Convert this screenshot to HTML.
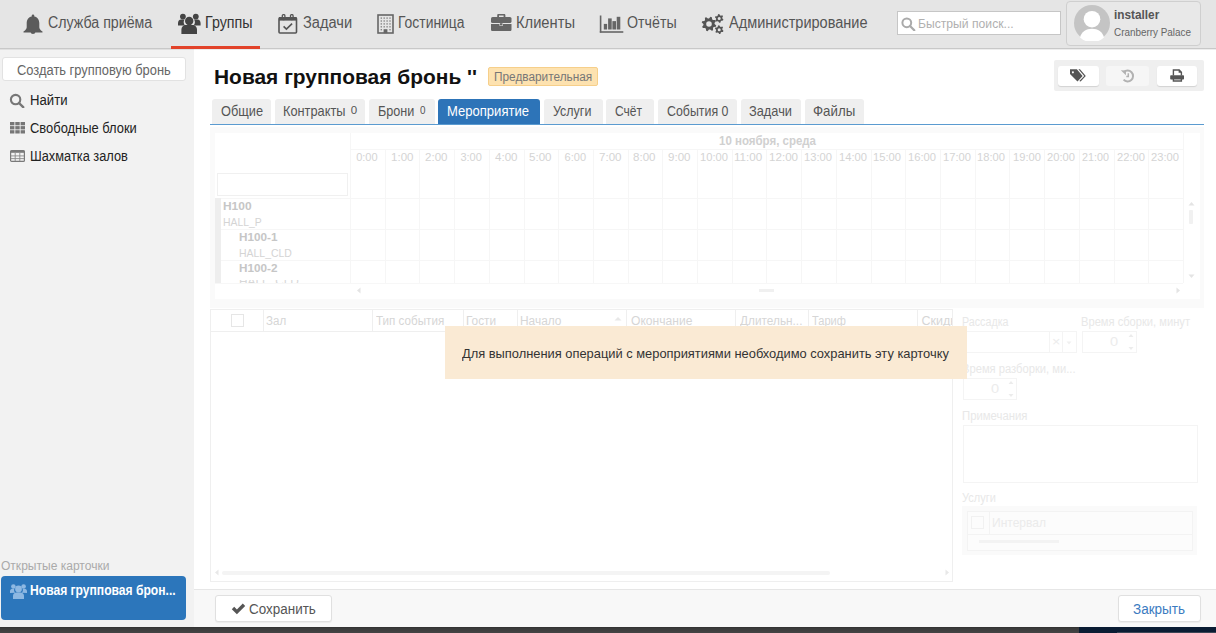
<!DOCTYPE html><html><head><meta charset="utf-8"><style>
html,body{margin:0;padding:0;}
body{width:1216px;height:633px;overflow:hidden;position:relative;background:#fff;font-family:"Liberation Sans", sans-serif;}
</style></head><body><div style="position:absolute;left:0px;top:0px;width:1216px;height:48px;background:#e5e5e5;"></div>
<div style="position:absolute;left:0px;top:48px;width:1216px;height:1px;background:#c8c8c8;"></div>
<div style="position:absolute;left:0px;top:49px;width:1216px;height:1px;background:rgba(0,0,0,.07);z-index:3;"></div>
<div style="position:absolute;left:171px;top:46px;width:89px;height:3px;background:#e2432a;"></div>
<svg style="position:absolute;left:23px;top:14px;" width="20" height="20" viewBox="0 0 20 20"><path d="M10 0.5c.8 0 1.3.6 1.3 1.3v.6c3.2.6 5 3.3 5 6.6v4.2c0 1.4.9 2.7 3.2 4.3v.9H.5v-.9c2.3-1.6 3.2-2.9 3.2-4.3V9c0-3.3 1.8-6 5-6.6v-.6c0-.7.5-1.3 1.3-1.3zM7.6 18h4.8c0 1.3-1.1 2-2.4 2s-2.4-.7-2.4-2z" fill="#5b5b5b"/></svg>
<div style="position:absolute;left:48.11px;top:14.56px;font-size:16px;line-height:16px;font-weight:400;color:#555;white-space:nowrap;transform-origin:0 0;transform:scaleX(0.8879);">Служба приёма</div>
<svg style="position:absolute;left:178px;top:13px;" width="23" height="21" viewBox="0 0 23 21"><circle cx="11.2" cy="8" r="4.2" fill="#444"/><circle cx="4.9" cy="3.6" r="2.9" fill="#444"/><circle cx="17.8" cy="3.6" r="2.9" fill="#444"/><path d="M3.4 21v-4.2c0-2.9 2.2-4.8 4.4-4.8h6.8c2.2 0 4.4 1.9 4.4 4.8V21z" fill="#444"/><path d="M0 12.4v-2.2c0-2 1.2-3.6 3.2-3.6h3.4c-.6.7-.9 1.5-.9 2.4 0 1.4.5 2.6 1.4 3.4z" fill="#444"/><path d="M22.6 12.4v-2.2c0-2-1.2-3.6-3.2-3.6H16c.6.7.9 1.5.9 2.4 0 1.4-.5 2.6-1.4 3.4z" fill="#444"/></svg>
<div style="position:absolute;left:204.97px;top:14.56px;font-size:16px;line-height:16px;font-weight:400;color:#333;white-space:nowrap;transform-origin:0 0;transform:scaleX(0.8902);">Группы</div>
<svg style="position:absolute;left:278px;top:14px;" width="20" height="20" viewBox="0 0 20 20"><rect x="1" y="3.8" width="17.5" height="15.2" rx="1" fill="none" stroke="#555" stroke-width="1.6"/><rect x="1" y="3" width="17.5" height="3.6" fill="#555"/><rect x="4.3" y="0.6" width="2.6" height="5" rx="1.2" fill="none" stroke="#555" stroke-width="1.3"/><rect x="12.5" y="0.6" width="2.6" height="5" rx="1.2" fill="none" stroke="#555" stroke-width="1.3"/><path d="M5.6 12.4l2.8 2.7 5.7-5.4" fill="none" stroke="#555" stroke-width="1.6"/></svg>
<div style="position:absolute;left:303.09px;top:14.56px;font-size:16px;line-height:16px;font-weight:400;color:#555;white-space:nowrap;transform-origin:0 0;transform:scaleX(0.9135);">Задачи</div>
<svg style="position:absolute;left:377px;top:14px;" width="17" height="20" viewBox="0 0 17 20"><rect x="1" y="1" width="15" height="18" fill="none" stroke="#666" stroke-width="1.6"/><rect x="3.6" y="3.4" width="1.4" height="1.4" fill="#888"/><rect x="6.5" y="3.4" width="1.4" height="1.4" fill="#888"/><rect x="9.4" y="3.4" width="1.4" height="1.4" fill="#888"/><rect x="12.3" y="3.4" width="1.4" height="1.4" fill="#888"/><rect x="3.6" y="6.3" width="1.4" height="1.4" fill="#888"/><rect x="6.5" y="6.3" width="1.4" height="1.4" fill="#888"/><rect x="9.4" y="6.3" width="1.4" height="1.4" fill="#888"/><rect x="12.3" y="6.3" width="1.4" height="1.4" fill="#888"/><rect x="3.6" y="9.2" width="1.4" height="1.4" fill="#888"/><rect x="6.5" y="9.2" width="1.4" height="1.4" fill="#888"/><rect x="9.4" y="9.2" width="1.4" height="1.4" fill="#888"/><rect x="12.3" y="9.2" width="1.4" height="1.4" fill="#888"/><rect x="3.6" y="12.1" width="1.4" height="1.4" fill="#888"/><rect x="6.5" y="12.1" width="1.4" height="1.4" fill="#888"/><rect x="9.4" y="12.1" width="1.4" height="1.4" fill="#888"/><rect x="12.3" y="12.1" width="1.4" height="1.4" fill="#888"/><rect x="3.6" y="15" width="1.4" height="1.4" fill="#888"/><rect x="12.3" y="15" width="1.4" height="1.4" fill="#888"/><rect x="6.6" y="15.2" width="3.8" height="4" fill="#666"/></svg>
<div style="position:absolute;left:398.13px;top:14.56px;font-size:16px;line-height:16px;font-weight:400;color:#555;white-space:nowrap;transform-origin:0 0;transform:scaleX(0.8684);">Гостиница</div>
<svg style="position:absolute;left:491px;top:14px;" width="21" height="17" viewBox="0 0 21 17"><path d="M6.2 3V1.2C6.2.6 6.7 0 7.4 0h5.8c.7 0 1.2.6 1.2 1.2V3h-1.8V1.6H8V3z" fill="#666"/><rect x="0" y="3" width="20.5" height="6" rx="1.6" fill="#666"/><path d="M0 9.9h8.4v1.8h3.6V9.9h8.5v5.5c0 .9-.7 1.6-1.6 1.6H1.6C.7 17 0 16.3 0 15.4z" fill="#666"/><rect x="8.9" y="9.2" width="2.6" height="2" fill="#666"/></svg>
<div style="position:absolute;left:516.08px;top:14.56px;font-size:16px;line-height:16px;font-weight:400;color:#555;white-space:nowrap;transform-origin:0 0;transform:scaleX(0.9194);">Клиенты</div>
<svg style="position:absolute;left:599px;top:15px;" width="25" height="18" viewBox="0 0 25 18"><rect x="0.8" y="0.5" width="1.6" height="17" fill="#666"/><rect x="0.8" y="16.2" width="23.5" height="1.6" fill="#666"/><rect x="4.8" y="8.9" width="3.3" height="5.6" fill="#666"/><rect x="9.1" y="3.4" width="3.6" height="11.1" fill="#666"/><rect x="13.4" y="6.1" width="3.6" height="8.4" fill="#666"/><rect x="17.7" y="1.8" width="3.6" height="12.7" fill="#666"/></svg>
<div style="position:absolute;left:627.11px;top:14.56px;font-size:16px;line-height:16px;font-weight:400;color:#555;white-space:nowrap;transform-origin:0 0;transform:scaleX(0.8889);">Отчёты</div>
<svg style="position:absolute;left:701px;top:13px;" width="25" height="22" viewBox="0 0 25 22"><path d="M15.26 12.44 L14.84 13.83 L12.66 14.11 L11.96 14.96 L12.11 17.15 L10.83 17.84 L9.09 16.49 L8.00 16.60 L6.56 18.26 L5.17 17.84 L4.89 15.66 L4.04 14.96 L1.85 15.11 L1.16 13.83 L2.51 12.09 L2.40 11.00 L0.74 9.56 L1.16 8.17 L3.34 7.89 L4.04 7.04 L3.89 4.85 L5.17 4.16 L6.91 5.51 L8.00 5.40 L9.44 3.74 L10.83 4.16 L11.11 6.34 L11.96 7.04 L14.15 6.89 L14.84 8.17 L13.49 9.91 L13.60 11.00Z M10.80 11.00 A2.8 2.8 0 1 0 5.20 11.00 A2.8 2.8 0 1 0 10.80 11.00Z" fill="#555" fill-rule="evenodd"/><path d="M22.45 6.54 L22.01 7.60 L20.46 7.66 L19.80 8.17 L19.34 9.65 L18.20 9.80 L17.37 8.49 L16.60 8.17 L15.09 8.51 L14.39 7.60 L15.11 6.23 L15.00 5.40 L13.95 4.26 L14.39 3.20 L15.94 3.14 L16.60 2.63 L17.06 1.15 L18.20 1.00 L19.03 2.31 L19.80 2.63 L21.31 2.29 L22.01 3.20 L21.29 4.57 L21.40 5.40Z M19.70 5.40 A1.5 1.5 0 1 0 16.70 5.40 A1.5 1.5 0 1 0 19.70 5.40Z" fill="#555" fill-rule="evenodd"/><path d="M22.45 17.84 L22.01 18.90 L20.46 18.96 L19.80 19.47 L19.34 20.95 L18.20 21.10 L17.37 19.79 L16.60 19.47 L15.09 19.81 L14.39 18.90 L15.11 17.53 L15.00 16.70 L13.95 15.56 L14.39 14.50 L15.94 14.44 L16.60 13.93 L17.06 12.45 L18.20 12.30 L19.03 13.61 L19.80 13.93 L21.31 13.59 L22.01 14.50 L21.29 15.87 L21.40 16.70Z M19.70 16.70 A1.5 1.5 0 1 0 16.70 16.70 A1.5 1.5 0 1 0 19.70 16.70Z" fill="#555" fill-rule="evenodd"/></svg>
<div style="position:absolute;left:729.0px;top:14.56px;font-size:16px;line-height:16px;font-weight:400;color:#555;white-space:nowrap;transform-origin:0 0;transform:scaleX(0.9079);">Администрирование</div>
<div style="position:absolute;left:897px;top:11px;width:162px;height:22px;background:#fff;border:1px solid #c6c6c6;"></div>
<svg style="position:absolute;left:901px;top:17px;" width="15" height="14" viewBox="0 0 15 14"><circle cx="5.8" cy="5.8" r="4.4" fill="none" stroke="#aaa" stroke-width="2"/><path d="M9 9l4.3 4.3" stroke="#aaa" stroke-width="2.2" stroke-linecap="round"/></svg>
<div style="position:absolute;left:918.06px;top:17.10px;font-size:13px;line-height:13px;font-weight:400;color:#b0b0b0;white-space:nowrap;transform-origin:0 0;transform:scaleX(0.9350);">Быстрый поиск...</div>
<div style="position:absolute;left:1066px;top:1px;width:135px;height:45px;background:#e8e8e8;border:1px solid #cfcfcf;border-radius:4px;box-sizing:border-box;"></div>
<svg style="position:absolute;left:1074px;top:5px;" width="36" height="36" viewBox="0 0 36 36"><circle cx="18" cy="18" r="18" fill="#c4c4c4"/><circle cx="18" cy="14.2" r="8.3" fill="#fff"/><path d="M6 32.5c1.4-5.6 6-8.8 12-8.8s10.6 3.2 12 8.8A18 18 0 0 1 6 32.5z" fill="#fff"/></svg>
<div style="position:absolute;left:1114.05px;top:7.60px;font-size:13px;line-height:13px;font-weight:700;color:#555;white-space:nowrap;transform-origin:0 0;transform:scaleX(0.9082);">installer</div>
<div style="position:absolute;left:1114.05px;top:26.69px;font-size:11px;line-height:11px;font-weight:400;color:#666;white-space:nowrap;transform-origin:0 0;transform:scaleX(0.9000);">Cranberry Palace</div>
<div style="position:absolute;left:0px;top:49px;width:194px;height:578px;background:#f2f2f2;"></div>
<div style="position:absolute;left:2px;top:57px;width:184px;height:24px;background:#fff;border:1px solid #e2e2e2;border-radius:3px;box-sizing:border-box;"></div>
<div style="position:absolute;left:17.08px;top:62.75px;font-size:14px;line-height:14px;font-weight:400;color:#666;white-space:nowrap;transform-origin:0 0;transform:scaleX(0.9212);">Создать групповую бронь</div>
<svg style="position:absolute;left:9px;top:93px;" width="16" height="15" viewBox="0 0 16 15"><circle cx="6.6" cy="6.6" r="4.7" fill="none" stroke="#777" stroke-width="2.1"/><path d="M10 10l4.2 4.2" stroke="#777" stroke-width="2.4" stroke-linecap="round"/></svg>
<div style="position:absolute;left:29.64px;top:93.15px;font-size:14px;line-height:14px;font-weight:400;color:#222;white-space:nowrap;transform-origin:0 0;transform:scaleX(0.9395);">Найти</div>
<svg style="position:absolute;left:10px;top:122px;" width="16" height="12" viewBox="0 0 16 12"><rect x="0.0" y="0.0" width="4.4" height="3.3" fill="#777"/><rect x="5.3" y="0.0" width="4.4" height="3.3" fill="#777"/><rect x="10.6" y="0.0" width="4.4" height="3.3" fill="#777"/><rect x="0.0" y="4.1" width="4.4" height="3.3" fill="#777"/><rect x="5.3" y="4.1" width="4.4" height="3.3" fill="#777"/><rect x="10.6" y="4.1" width="4.4" height="3.3" fill="#777"/><rect x="0.0" y="8.2" width="4.4" height="3.3" fill="#777"/><rect x="5.3" y="8.2" width="4.4" height="3.3" fill="#777"/><rect x="10.6" y="8.2" width="4.4" height="3.3" fill="#777"/></svg>
<div style="position:absolute;left:29.65px;top:120.95px;font-size:14px;line-height:14px;font-weight:400;color:#222;white-space:nowrap;transform-origin:0 0;transform:scaleX(0.9228);">Свободные блоки</div>
<svg style="position:absolute;left:10px;top:150px;" width="15" height="12" viewBox="0 0 15 12"><rect x="0.6" y="0.6" width="13.8" height="10.8" rx="1" fill="none" stroke="#7a7a7a" stroke-width="1.2"/><rect x="0.6" y="0.6" width="13.8" height="2.2" fill="#7a7a7a"/><path d="M5.2 3v8M9.8 3v8M1 5.9h13M1 8.6h13" stroke="#8a8a8a" stroke-width="0.9"/></svg>
<div style="position:absolute;left:29.66px;top:149.05px;font-size:14px;line-height:14px;font-weight:400;color:#222;white-space:nowrap;transform-origin:0 0;transform:scaleX(0.9151);">Шахматка залов</div>
<div style="position:absolute;left:0.59px;top:559.84px;font-size:12px;line-height:12px;font-weight:400;color:#aaa;white-space:nowrap;transform-origin:0 0;transform:scaleX(1.0028);">Открытые карточки</div>
<div style="position:absolute;left:1px;top:576px;width:185px;height:44px;background:#2c76bb;border-radius:4px;"></div>
<svg style="position:absolute;left:10px;top:584px;" width="17" height="15" viewBox="0 0 17 15"><circle cx="8.5" cy="5" r="3.4" fill="#8eb8e2"/><circle cx="3.4" cy="2.5" r="2.3" fill="#8eb8e2"/><circle cx="13.6" cy="2.5" r="2.3" fill="#8eb8e2"/><path d="M3 15v-3c0-2 1.6-3.4 3.3-3.4h4.4c1.7 0 3.3 1.4 3.3 3.4v3z" fill="#8eb8e2"/><path d="M0 9v-1.8c0-1.4 1-2.4 2.4-2.4h2.1c-.3.4-.4.8-.4 1.3 0 1 .4 2 1.1 2.6z" fill="#8eb8e2"/><path d="M17 9v-1.8c0-1.4-1-2.4-2.4-2.4h-2.1c.3.4.4.8.4 1.3 0 1-.4 2-1.1 2.6z" fill="#8eb8e2"/></svg>
<div style="position:absolute;left:29.87px;top:583.35px;font-size:14px;line-height:14px;font-weight:700;color:#fff;white-space:nowrap;transform-origin:0 0;transform:scaleX(0.8641);">Новая групповая брон...</div>
<div style="position:absolute;left:213.6px;top:65.62px;font-size:21px;line-height:21px;font-weight:700;color:#111;white-space:nowrap;transform-origin:0 0;transform:scaleX(0.9962);">Новая групповая бронь ''</div>
<div style="position:absolute;left:488px;top:67px;width:110px;height:19px;background:#fde2b0;border:1px solid #f6cf8a;border-radius:2px;box-sizing:border-box;"></div>
<div style="position:absolute;left:494.01px;top:70.84px;font-size:12px;line-height:12px;font-weight:400;color:#777;white-space:nowrap;transform-origin:0 0;transform:scaleX(0.9857);">Предварительная</div>
<div style="position:absolute;left:1054px;top:60px;width:150px;height:31px;background:#efefef;border-radius:2px;"></div>
<div style="position:absolute;left:1058px;top:66px;width:41px;height:20px;background:#fff;border-radius:3px;box-shadow:0 1px 1px rgba(0,0,0,.12);"></div>
<div style="position:absolute;left:1106px;top:66px;width:43px;height:20px;background:#f6f6f6;border-radius:3px;"></div>
<div style="position:absolute;left:1157px;top:66px;width:40px;height:20px;background:#fff;border-radius:3px;box-shadow:0 1px 1px rgba(0,0,0,.12);"></div>
<svg style="position:absolute;left:1069px;top:69px;" width="18" height="14" viewBox="0 0 18 14"><path d="M1 0.3H7.9L13.6 7L8.5 12.4L1 5Z M3.9 2.2a1 1 0 1 0 .01 0z" fill="#555" fill-rule="evenodd"/><path d="M9.4 0.3H11L16.8 7L11.6 12.4L10.3 11.9L15.2 7Z" fill="#555"/></svg>
<svg style="position:absolute;left:1119px;top:68px;" width="16" height="15" viewBox="0 0 16 15"><path d="M4.8 4.2A5.4 5.4 0 1 1 4.6 11.6" fill="none" stroke="#b2b2b2" stroke-width="2"/><path d="M1.8 2.2L7 2.6 L6.9 7.2Z" fill="#b2b2b2"/><path d="M1.9 2.2V7.2H6.8" fill="none" stroke="#b2b2b2" stroke-width="0"/><path d="M9.3 5.3V8.4H7.3" fill="none" stroke="#b2b2b2" stroke-width="1.5"/></svg>
<svg style="position:absolute;left:1170px;top:69px;" width="15" height="13" viewBox="0 0 15 13"><path d="M3.4 6.6V1H9.2L11.4 3.2V6.6" fill="none" stroke="#555" stroke-width="1.4"/><path d="M8.6 0.4V3.8H12" fill="#555"/><rect x="0.2" y="6.2" width="13.8" height="4.4" rx="0.8" fill="#555"/><path d="M3.4 10V12H11.4V10" fill="none" stroke="#555" stroke-width="1.4"/></svg>
<div style="position:absolute;left:210px;top:124px;width:994px;height:1px;background:#5b9bd0;"></div>
<div style="position:absolute;left:212px;top:99px;width:59px;height:25px;background:#efefef;border-radius:3px 3px 0 0;"></div>
<div style="position:absolute;left:221.06px;top:104.43px;font-size:14.5px;line-height:14.5px;font-weight:400;color:#555;white-space:nowrap;transform-origin:0 0;transform:scaleX(0.8804);">Общие</div>
<div style="position:absolute;left:275px;top:99px;width:90px;height:25px;background:#efefef;border-radius:3px 3px 0 0;"></div>
<div style="position:absolute;left:283.12px;top:104.43px;font-size:14.5px;line-height:14.5px;font-weight:400;color:#555;white-space:nowrap;transform-origin:0 0;transform:scaleX(0.8814);">Контракты</div>
<div style="position:absolute;left:350.79px;top:104.87px;font-size:11.5px;line-height:11.5px;font-weight:400;color:#555;white-space:nowrap;transform-origin:0 0;">0</div>
<div style="position:absolute;left:369px;top:99px;width:65.5px;height:25px;background:#efefef;border-radius:3px 3px 0 0;"></div>
<div style="position:absolute;left:377.75px;top:104.43px;font-size:14.5px;line-height:14.5px;font-weight:400;color:#555;white-space:nowrap;transform-origin:0 0;transform:scaleX(0.8707);">Брони</div>
<div style="position:absolute;left:420.48px;top:104.87px;font-size:11.5px;line-height:11.5px;font-weight:400;color:#555;white-space:nowrap;transform-origin:0 0;transform:scaleX(0.8571);">0</div>
<div style="position:absolute;left:438px;top:99px;width:101.5px;height:25px;background:#2d74b8;border-radius:3px 3px 0 0;"></div>
<div style="position:absolute;left:446.52px;top:104.43px;font-size:14.5px;line-height:14.5px;font-weight:400;color:#fff;white-space:nowrap;transform-origin:0 0;transform:scaleX(0.9000);">Мероприятие</div>
<div style="position:absolute;left:544px;top:99px;width:59px;height:25px;background:#efefef;border-radius:3px 3px 0 0;"></div>
<div style="position:absolute;left:553.07px;top:104.43px;font-size:14.5px;line-height:14.5px;font-weight:400;color:#555;white-space:nowrap;transform-origin:0 0;transform:scaleX(0.8605);">Услуги</div>
<div style="position:absolute;left:606.4px;top:99px;width:47.7px;height:25px;background:#efefef;border-radius:3px 3px 0 0;"></div>
<div style="position:absolute;left:614.61px;top:104.43px;font-size:14.5px;line-height:14.5px;font-weight:400;color:#555;white-space:nowrap;transform-origin:0 0;transform:scaleX(0.8290);">Счёт</div>
<div style="position:absolute;left:658px;top:99px;width:79px;height:25px;background:#efefef;border-radius:3px 3px 0 0;"></div>
<div style="position:absolute;left:666.51px;top:104.43px;font-size:14.5px;line-height:14.5px;font-weight:400;color:#555;white-space:nowrap;transform-origin:0 0;transform:scaleX(0.8535);">События 0</div>
<div style="position:absolute;left:741px;top:99px;width:60px;height:25px;background:#efefef;border-radius:3px 3px 0 0;"></div>
<div style="position:absolute;left:749.3px;top:104.43px;font-size:14.5px;line-height:14.5px;font-weight:400;color:#555;white-space:nowrap;transform-origin:0 0;transform:scaleX(0.8830);">Задачи</div>
<div style="position:absolute;left:805.4px;top:99px;width:58.2px;height:25px;background:#efefef;border-radius:3px 3px 0 0;"></div>
<div style="position:absolute;left:813.27px;top:104.43px;font-size:14.5px;line-height:14.5px;font-weight:400;color:#555;white-space:nowrap;transform-origin:0 0;transform:scaleX(0.9159);">Файлы</div>
<div style="position:absolute;left:210px;top:127px;width:994px;height:181px;background:#fafafa;"></div>
<div style="position:absolute;left:215px;top:133px;width:985px;height:166px;background:#fff;"></div>
<div style="position:absolute;left:217px;top:173px;width:131px;height:23px;border:1px solid #f0f0f0;box-sizing:border-box;"></div>
<div style="position:absolute;left:350px;top:133px;width:1px;height:150px;background:#f6f6f6;"></div>
<div style="position:absolute;left:215px;top:198px;width:968px;height:1px;background:#f6f6f6;"></div>
<div style="position:absolute;left:350px;top:149px;width:833px;height:1px;background:#f6f6f6;"></div>
<div style="position:absolute;left:356.19px;top:151.69px;font-size:11px;line-height:11px;font-weight:400;color:#d4d4d4;white-space:nowrap;transform-origin:0 0;">0:00</div>
<div style="position:absolute;left:385px;top:149px;width:1px;height:134px;background:#f6f6f6;"></div>
<div style="position:absolute;left:390.56px;top:151.69px;font-size:11px;line-height:11px;font-weight:400;color:#d4d4d4;white-space:nowrap;transform-origin:0 0;transform:scaleX(1.0500);">1:00</div>
<div style="position:absolute;left:419px;top:149px;width:1px;height:134px;background:#f6f6f6;"></div>
<div style="position:absolute;left:424.95px;top:151.69px;font-size:11px;line-height:11px;font-weight:400;color:#d4d4d4;white-space:nowrap;transform-origin:0 0;transform:scaleX(1.0500);">2:00</div>
<div style="position:absolute;left:454px;top:149px;width:1px;height:134px;background:#f6f6f6;"></div>
<div style="position:absolute;left:460.39px;top:151.69px;font-size:11px;line-height:11px;font-weight:400;color:#d4d4d4;white-space:nowrap;transform-origin:0 0;">3:00</div>
<div style="position:absolute;left:489px;top:149px;width:1px;height:134px;background:#f6f6f6;"></div>
<div style="position:absolute;left:494.76px;top:151.69px;font-size:11px;line-height:11px;font-weight:400;color:#d4d4d4;white-space:nowrap;transform-origin:0 0;transform:scaleX(1.0500);">4:00</div>
<div style="position:absolute;left:524px;top:149px;width:1px;height:134px;background:#f6f6f6;"></div>
<div style="position:absolute;left:529.15px;top:151.69px;font-size:11px;line-height:11px;font-weight:400;color:#d4d4d4;white-space:nowrap;transform-origin:0 0;transform:scaleX(1.0500);">5:00</div>
<div style="position:absolute;left:558px;top:149px;width:1px;height:134px;background:#f6f6f6;"></div>
<div style="position:absolute;left:564.6px;top:151.69px;font-size:11px;line-height:11px;font-weight:400;color:#d4d4d4;white-space:nowrap;transform-origin:0 0;">6:00</div>
<div style="position:absolute;left:593px;top:149px;width:1px;height:134px;background:#f6f6f6;"></div>
<div style="position:absolute;left:598.98px;top:151.69px;font-size:11px;line-height:11px;font-weight:400;color:#d4d4d4;white-space:nowrap;transform-origin:0 0;transform:scaleX(1.0500);">7:00</div>
<div style="position:absolute;left:628px;top:149px;width:1px;height:134px;background:#f6f6f6;"></div>
<div style="position:absolute;left:633.35px;top:151.69px;font-size:11px;line-height:11px;font-weight:400;color:#d4d4d4;white-space:nowrap;transform-origin:0 0;transform:scaleX(1.0500);">8:00</div>
<div style="position:absolute;left:662px;top:149px;width:1px;height:134px;background:#f6f6f6;"></div>
<div style="position:absolute;left:667.74px;top:151.69px;font-size:11px;line-height:11px;font-weight:400;color:#d4d4d4;white-space:nowrap;transform-origin:0 0;transform:scaleX(1.0500);">9:00</div>
<div style="position:absolute;left:697px;top:149px;width:1px;height:134px;background:#f6f6f6;"></div>
<div style="position:absolute;left:699.77px;top:151.69px;font-size:11px;line-height:11px;font-weight:400;color:#d4d4d4;white-space:nowrap;transform-origin:0 0;transform:scaleX(1.0154);">10:00</div>
<div style="position:absolute;left:732px;top:149px;width:1px;height:134px;background:#f6f6f6;"></div>
<div style="position:absolute;left:734.12px;top:151.69px;font-size:11px;line-height:11px;font-weight:400;color:#d4d4d4;white-space:nowrap;transform-origin:0 0;transform:scaleX(1.0560);">11:00</div>
<div style="position:absolute;left:766px;top:149px;width:1px;height:134px;background:#f6f6f6;"></div>
<div style="position:absolute;left:768.7px;top:151.69px;font-size:11px;line-height:11px;font-weight:400;color:#d4d4d4;white-space:nowrap;transform-origin:0 0;transform:scaleX(1.0560);">12:00</div>
<div style="position:absolute;left:801px;top:149px;width:1px;height:134px;background:#f6f6f6;"></div>
<div style="position:absolute;left:804.18px;top:151.69px;font-size:11px;line-height:11px;font-weight:400;color:#d4d4d4;white-space:nowrap;transform-origin:0 0;transform:scaleX(1.0154);">13:00</div>
<div style="position:absolute;left:836px;top:149px;width:1px;height:134px;background:#f6f6f6;"></div>
<div style="position:absolute;left:838.58px;top:151.69px;font-size:11px;line-height:11px;font-weight:400;color:#d4d4d4;white-space:nowrap;transform-origin:0 0;transform:scaleX(1.0154);">14:00</div>
<div style="position:absolute;left:871px;top:149px;width:1px;height:134px;background:#f6f6f6;"></div>
<div style="position:absolute;left:872.98px;top:151.69px;font-size:11px;line-height:11px;font-weight:400;color:#d4d4d4;white-space:nowrap;transform-origin:0 0;transform:scaleX(1.0154);">15:00</div>
<div style="position:absolute;left:905px;top:149px;width:1px;height:134px;background:#f6f6f6;"></div>
<div style="position:absolute;left:908.38px;top:151.69px;font-size:11px;line-height:11px;font-weight:400;color:#d4d4d4;white-space:nowrap;transform-origin:0 0;transform:scaleX(1.0154);">16:00</div>
<div style="position:absolute;left:940px;top:149px;width:1px;height:134px;background:#f6f6f6;"></div>
<div style="position:absolute;left:942.77px;top:151.69px;font-size:11px;line-height:11px;font-weight:400;color:#d4d4d4;white-space:nowrap;transform-origin:0 0;transform:scaleX(1.0154);">17:00</div>
<div style="position:absolute;left:975px;top:149px;width:1px;height:134px;background:#f6f6f6;"></div>
<div style="position:absolute;left:977.17px;top:151.69px;font-size:11px;line-height:11px;font-weight:400;color:#d4d4d4;white-space:nowrap;transform-origin:0 0;transform:scaleX(1.0154);">18:00</div>
<div style="position:absolute;left:1009px;top:149px;width:1px;height:134px;background:#f6f6f6;"></div>
<div style="position:absolute;left:1012.59px;top:151.69px;font-size:11px;line-height:11px;font-weight:400;color:#d4d4d4;white-space:nowrap;transform-origin:0 0;transform:scaleX(1.0154);">19:00</div>
<div style="position:absolute;left:1044px;top:149px;width:1px;height:134px;background:#f6f6f6;"></div>
<div style="position:absolute;left:1046.98px;top:151.69px;font-size:11px;line-height:11px;font-weight:400;color:#d4d4d4;white-space:nowrap;transform-origin:0 0;transform:scaleX(1.0154);">20:00</div>
<div style="position:absolute;left:1079px;top:149px;width:1px;height:134px;background:#f6f6f6;"></div>
<div style="position:absolute;left:1082.39px;top:151.69px;font-size:11px;line-height:11px;font-weight:400;color:#d4d4d4;white-space:nowrap;transform-origin:0 0;transform:scaleX(0.9778);">21:00</div>
<div style="position:absolute;left:1114px;top:149px;width:1px;height:134px;background:#f6f6f6;"></div>
<div style="position:absolute;left:1116.78px;top:151.69px;font-size:11px;line-height:11px;font-weight:400;color:#d4d4d4;white-space:nowrap;transform-origin:0 0;transform:scaleX(1.0154);">22:00</div>
<div style="position:absolute;left:1148px;top:149px;width:1px;height:134px;background:#f6f6f6;"></div>
<div style="position:absolute;left:1151.18px;top:151.69px;font-size:11px;line-height:11px;font-weight:400;color:#d4d4d4;white-space:nowrap;transform-origin:0 0;transform:scaleX(1.0154);">23:00</div>
<div style="position:absolute;left:1183px;top:133px;width:1px;height:150px;background:#f6f6f6;"></div>
<div style="position:absolute;left:719.21px;top:134.64px;font-size:12px;line-height:12px;font-weight:700;color:#d0d0d0;white-space:nowrap;transform-origin:0 0;transform:scaleX(0.9574);">10 ноября, среда</div>
<div style="position:absolute;left:220px;top:229px;width:963px;height:1px;background:#f6f6f6;"></div>
<div style="position:absolute;left:220px;top:260px;width:963px;height:1px;background:#f6f6f6;"></div>
<div style="position:absolute;left:215px;top:198px;width:6px;height:85px;background:#eeeeee;"></div>
<div style="position:absolute;left:215px;top:283px;width:968px;height:1px;background:#f7f7f7;"></div>
<div style="position:absolute;left:222.77px;top:200.77px;font-size:11.5px;line-height:11.5px;font-weight:700;color:#c6c6c6;white-space:nowrap;transform-origin:0 0;transform:scaleX(1.0385);">H100</div>
<div style="position:absolute;left:222.85px;top:216.67px;font-size:11.5px;line-height:11.5px;font-weight:400;color:#d4d4d4;white-space:nowrap;transform-origin:0 0;transform:scaleX(0.9048);">HALL_P</div>
<div style="position:absolute;left:238.99px;top:231.77px;font-size:11.5px;line-height:11.5px;font-weight:700;color:#c6c6c6;white-space:nowrap;transform-origin:0 0;transform:scaleX(1.0189);">H100-1</div>
<div style="position:absolute;left:239.05px;top:247.57px;font-size:11.5px;line-height:11.5px;font-weight:400;color:#d4d4d4;white-space:nowrap;transform-origin:0 0;transform:scaleX(0.9088);">HALL_CLD</div>
<div style="position:absolute;left:238.99px;top:262.87px;font-size:11.5px;line-height:11.5px;font-weight:700;color:#c6c6c6;white-space:nowrap;transform-origin:0 0;transform:scaleX(1.0189);">H100-2</div>
<div style="position:absolute;left:239px;top:280px;width:60px;height:3px;overflow:hidden;"><div style="position:absolute;left:0;top:-5px;font-size:11.5px;color:#d8d8d8;white-space:nowrap;transform:scaleX(1.03);transform-origin:0 0;">HALL_CLD</div></div>
<svg style="position:absolute;left:1188px;top:201px;" width="7" height="5" viewBox="0 0 7 5"><path d="M0.5 4.5L3.5 1l3 3.5z" fill="#e4e4e4"/></svg>
<div style="position:absolute;left:1189px;top:210px;width:4px;height:14px;background:#f1f1f1;border-radius:1px;"></div>
<svg style="position:absolute;left:1188px;top:274px;" width="7" height="5" viewBox="0 0 7 5"><path d="M0.5 0.5L3.5 4l3-3.5z" fill="#e4e4e4"/></svg>
<svg style="position:absolute;left:356px;top:287px;" width="5" height="7" viewBox="0 0 5 7"><path d="M4.5 0.5L1 3.5l3.5 3z" fill="#e4e4e4"/></svg>
<div style="position:absolute;left:759px;top:289px;width:15px;height:3px;background:#f0f0f0;"></div>
<svg style="position:absolute;left:1176px;top:287px;" width="5" height="7" viewBox="0 0 5 7"><path d="M0.5 0.5L4 3.5l-3.5 3z" fill="#e4e4e4"/></svg>
<div style="position:absolute;left:210px;top:309px;width:743px;height:273px;border:1px solid #efefef;box-sizing:border-box;background:#fff;"></div>
<div style="position:absolute;left:211px;top:331px;width:741px;height:1px;background:#efefef;"></div>
<div style="position:absolute;left:263px;top:310px;width:1px;height:21px;background:#efefef;"></div>
<div style="position:absolute;left:372px;top:310px;width:1px;height:21px;background:#efefef;"></div>
<div style="position:absolute;left:463px;top:310px;width:1px;height:21px;background:#efefef;"></div>
<div style="position:absolute;left:517px;top:310px;width:1px;height:21px;background:#efefef;"></div>
<div style="position:absolute;left:626px;top:310px;width:1px;height:21px;background:#efefef;"></div>
<div style="position:absolute;left:735px;top:310px;width:1px;height:21px;background:#efefef;"></div>
<div style="position:absolute;left:808px;top:310px;width:1px;height:21px;background:#efefef;"></div>
<div style="position:absolute;left:917px;top:310px;width:1px;height:21px;background:#efefef;"></div>
<div style="position:absolute;left:231px;top:314px;width:13px;height:13px;border:1px solid #e6e6e6;box-sizing:border-box;"></div>
<div style="position:absolute;left:266.49px;top:315.42px;font-size:12.5px;line-height:12.5px;font-weight:400;color:#d6d6d6;white-space:nowrap;transform-origin:0 0;transform:scaleX(0.9250);">Зал</div>
<div style="position:absolute;left:376.44px;top:315.42px;font-size:12.5px;line-height:12.5px;font-weight:400;color:#d6d6d6;white-space:nowrap;transform-origin:0 0;transform:scaleX(0.9306);">Тип события</div>
<div style="position:absolute;left:466.05px;top:315.42px;font-size:12.5px;line-height:12.5px;font-weight:400;color:#d6d6d6;white-space:nowrap;transform-origin:0 0;transform:scaleX(0.9467);">Гости</div>
<div style="position:absolute;left:520.45px;top:315.42px;font-size:12.5px;line-height:12.5px;font-weight:400;color:#d6d6d6;white-space:nowrap;transform-origin:0 0;transform:scaleX(0.9524);">Начало</div>
<svg style="position:absolute;left:614px;top:316px;" width="8" height="5" viewBox="0 0 8 5"><path d="M0.5 4.5L4 1l3.5 3.5z" fill="#e8e8e8"/></svg>
<div style="position:absolute;left:630.62px;top:315.42px;font-size:12.5px;line-height:12.5px;font-weight:400;color:#d6d6d6;white-space:nowrap;transform-origin:0 0;transform:scaleX(0.9677);">Окончание</div>
<div style="position:absolute;left:739.61px;top:315.42px;font-size:12.5px;line-height:12.5px;font-weight:400;color:#d6d6d6;white-space:nowrap;transform-origin:0 0;transform:scaleX(0.9462);">Длительн...</div>
<div style="position:absolute;left:812.48px;top:315.42px;font-size:12.5px;line-height:12.5px;font-weight:400;color:#d6d6d6;white-space:nowrap;transform-origin:0 0;transform:scaleX(0.8865);">Тариф</div>
<div style="position:absolute;left:917px;top:310px;width:35px;height:21px;overflow:hidden;"><div style="position:absolute;left:4.5px;top:5.42px;font-size:12.5px;line-height:12.5px;color:#d6d6d6;white-space:nowrap;">Скидка</div></div>
<svg style="position:absolute;left:214px;top:569px;" width="5" height="7" viewBox="0 0 5 7"><path d="M4.5 0.5L1 3.5l3.5 3z" fill="#e8e8e8"/></svg>
<div style="position:absolute;left:222px;top:571px;width:608px;height:4px;background:#f4f4f4;border-radius:2px;"></div>
<svg style="position:absolute;left:945px;top:569px;" width="5" height="7" viewBox="0 0 5 7"><path d="M0.5 0.5L4 3.5l-3.5 3z" fill="#e8e8e8"/></svg>
<div style="position:absolute;left:445px;top:326px;width:522px;height:53px;background:#faead4;z-index:5;"></div>
<div style="position:absolute;left:462.2px;top:347.10px;font-size:13px;line-height:13px;font-weight:400;color:#333;white-space:nowrap;transform-origin:0 0;transform:scaleX(0.9898);z-index:6;">Для выполнения операций с мероприятиями необходимо сохранить эту карточку</div>
<div style="position:absolute;left:961.58px;top:316.22px;font-size:12.5px;line-height:12.5px;font-weight:400;color:#e8e8e8;white-space:nowrap;transform-origin:0 0;transform:scaleX(0.8566);">Рассадка</div>
<div style="position:absolute;left:1081.16px;top:316.22px;font-size:12.5px;line-height:12.5px;font-weight:400;color:#e8e8e8;white-space:nowrap;transform-origin:0 0;transform:scaleX(0.8917);">Время сборки, минут</div>
<div style="position:absolute;left:963px;top:331px;width:114px;height:22px;border:1px solid #f4f4f4;box-sizing:border-box;"></div>
<div style="position:absolute;left:1049px;top:331px;width:1px;height:22px;background:#f4f4f4;"></div>
<div style="position:absolute;left:1062px;top:331px;width:1px;height:22px;background:#f4f4f4;"></div>
<div style="position:absolute;left:1051.8px;top:335.84px;font-size:12px;line-height:12px;font-weight:400;color:#ececec;white-space:nowrap;transform-origin:0 0;transform:scaleX(1.2000);">×</div>
<svg style="position:absolute;left:1066px;top:341px;" width="6" height="4" viewBox="0 0 6 4"><path d="M0.5 0.5L3 3.5l2.5-3z" fill="#f0f0f0"/></svg>
<div style="position:absolute;left:1082px;top:331px;width:55px;height:22px;border:1px solid #f4f4f4;box-sizing:border-box;"></div>
<div style="position:absolute;left:1109.83px;top:336.42px;font-size:12.5px;line-height:12.5px;font-weight:400;color:#ececec;white-space:nowrap;transform-origin:0 0;transform:scaleX(1.1667);">0</div>
<svg style="position:absolute;left:1128px;top:333px;" width="6" height="18" viewBox="0 0 6 18"><path d="M0.5 4L3 1l2.5 3zM0.5 14L3 17l2.5-3z" fill="#ececec"/></svg>
<div style="position:absolute;left:961.53px;top:363.22px;font-size:12.5px;line-height:12.5px;font-weight:400;color:#e8e8e8;white-space:nowrap;transform-origin:0 0;transform:scaleX(0.8952);">Время разборки, ми...</div>
<div style="position:absolute;left:963px;top:378px;width:54px;height:22px;border:1px solid #f4f4f4;box-sizing:border-box;"></div>
<div style="position:absolute;left:990.83px;top:383.42px;font-size:12.5px;line-height:12.5px;font-weight:400;color:#ececec;white-space:nowrap;transform-origin:0 0;transform:scaleX(1.1667);">0</div>
<svg style="position:absolute;left:1008px;top:380px;" width="6" height="18" viewBox="0 0 6 18"><path d="M0.5 4L3 1l2.5 3zM0.5 14L3 17l2.5-3z" fill="#ececec"/></svg>
<div style="position:absolute;left:961.51px;top:410.02px;font-size:12.5px;line-height:12.5px;font-weight:400;color:#e8e8e8;white-space:nowrap;transform-origin:0 0;transform:scaleX(0.9071);">Примечания</div>
<div style="position:absolute;left:963px;top:425px;width:235px;height:58px;border:1px solid #f4f4f4;box-sizing:border-box;"></div>
<div style="position:absolute;left:962.42px;top:492.12px;font-size:12.5px;line-height:12.5px;font-weight:400;color:#e8e8e8;white-space:nowrap;transform-origin:0 0;transform:scaleX(0.8811);">Услуги</div>
<div style="position:absolute;left:962px;top:506px;width:235px;height:49px;background:#fafafa;"></div>
<div style="position:absolute;left:967px;top:511px;width:226px;height:40px;border:1px solid #f3f3f3;box-sizing:border-box;background:#fcfcfc;"></div>
<div style="position:absolute;left:968px;top:534px;width:224px;height:1px;background:#f3f3f3;"></div>
<div style="position:absolute;left:989px;top:512px;width:1px;height:22px;background:#f3f3f3;"></div>
<div style="position:absolute;left:971px;top:516px;width:13px;height:13px;border:1px solid #f1f1f1;box-sizing:border-box;"></div>
<div style="position:absolute;left:992.11px;top:516.10px;font-size:13px;line-height:13px;font-weight:400;color:#ebebeb;white-space:nowrap;transform-origin:0 0;transform:scaleX(0.9250);">Интервал</div>
<div style="position:absolute;left:979px;top:540px;width:80px;height:3px;background:#f3f3f3;"></div>
<div style="position:absolute;left:194px;top:589px;width:1022px;height:38px;background:#f8f8f8;border-top:1px solid #e6e6e6;box-sizing:border-box;"></div>
<div style="position:absolute;left:215px;top:595px;width:117px;height:27px;background:#fff;border:1px solid #e0e0e0;border-radius:3px;box-sizing:border-box;box-shadow:0 1px 1px rgba(0,0,0,.05);"></div>
<svg style="position:absolute;left:231px;top:603px;" width="15" height="12" viewBox="0 0 15 12"><path d="M0.8 6.2l2.4-2.4 2.7 2.7L11.8.6l2.4 2.4-8.3 8.3z" fill="#555"/></svg>
<div style="position:absolute;left:248.64px;top:601.95px;font-size:14px;line-height:14px;font-weight:400;color:#555;white-space:nowrap;transform-origin:0 0;transform:scaleX(0.9603);">Сохранить</div>
<div style="position:absolute;left:1118px;top:595px;width:83px;height:27px;background:#fff;border:1px solid #e0e0e0;border-radius:3px;box-sizing:border-box;box-shadow:0 1px 1px rgba(0,0,0,.05);"></div>
<div style="position:absolute;left:1133.21px;top:601.95px;font-size:14px;line-height:14px;font-weight:400;color:#3b7bbf;white-space:nowrap;transform-origin:0 0;transform:scaleX(0.9642);">Закрыть</div>
<div style="position:absolute;left:0px;top:627px;width:1216px;height:6px;background:linear-gradient(#2f2f2f 0,#3a3a3a 1px,#444 100%);"></div>
<div style="position:absolute;left:1079px;top:627px;width:137px;height:6px;background:#0a1c33;"></div>
<div style="position:absolute;left:1117px;top:632px;width:99px;height:1px;background:#3a4656;"></div></body></html>
